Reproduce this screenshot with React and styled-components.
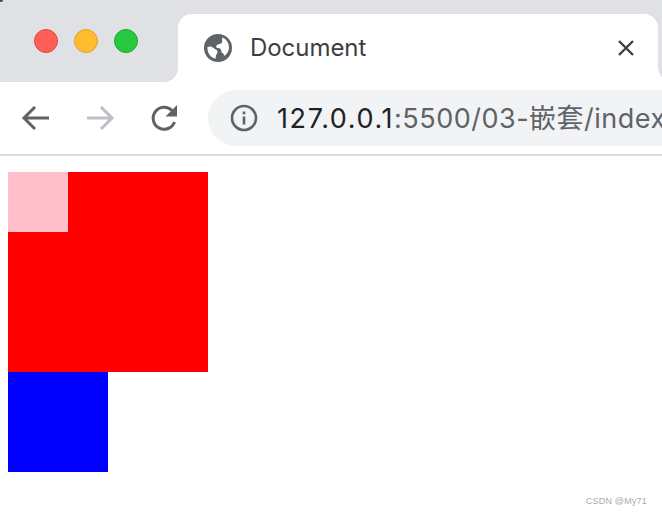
import React from 'react';
import styled, { createGlobalStyle } from 'styled-components';

const GlobalStyle = createGlobalStyle`
  html, body { margin: 0; padding: 0; background: #fff; }
  body { width: 662px; height: 514px; overflow: hidden; font-family: "Inter", "Noto Sans CJK SC", sans-serif; }
`;

const Window = styled.div`
  position: relative;
  width: 662px;
  height: 514px;
  overflow: hidden;
  background: #fff;
`;

const Corner = styled.span`
  position: absolute;
  left: 0;
  top: 0;
  width: 3px;
  height: 2px;
  background: #1d5f66;
  border-bottom-right-radius: 2px;
`;

const TabStrip = styled.div`
  display: flex;
  height: 82px;
`;

const Lights = styled.div`
  width: 178px;
  display: flex;
  gap: 16px;
  padding: 29px 0 0 34px;
  box-sizing: border-box;
  background: #dfe1e5;
  border-bottom-right-radius: 14px;
`;

const Light = styled.span`
  width: 24px;
  height: 24px;
  border-radius: 50%;
  box-sizing: border-box;
  background: ${(props) => props.$fill};
  border: 1px solid ${(props) => props.$edge};
`;

const TabSlot = styled.div`
  flex: 1;
  display: flex;
  padding: 14px 4px 0 0;
  background: #dfe1e5;
`;

const Tab = styled.div`
  position: relative;
  flex: 1;
  display: flex;
  align-items: center;
  padding: 0 22px 1px 25px;
  background: #fff;
  border-radius: 14px 14px 0 0;
  height: 68px;
  box-sizing: border-box;

  &::after {
    content: "";
    position: absolute;
    right: -4px;
    bottom: 0;
    width: 4px;
    height: 14px;
    background: radial-gradient(circle 14px at 14px 0, transparent 13.5px, #fff 14px);
  }
`;

const TabTitle = styled.span`
  flex: 1;
  margin-left: 17px;
  font-size: 24px;
  letter-spacing: -0.05px;
  color: #3c4043;
  line-height: 30px;
`;

const Toolbar = styled.div`
  display: flex;
  align-items: center;
  height: 72px;
  padding-left: 20px;
  border-bottom: 2px solid #dadce0;
`;

const NavButton = styled.div`
  width: 32px;
  height: 32px;
  margin-right: ${(props) => props.$gap}px;
  display: flex;
  align-items: center;
  justify-content: center;
`;

const Omnibox = styled.div`
  flex: 1;
  min-width: 0;
  height: 56px;
  display: flex;
  align-items: center;
  padding-left: 22px;
  background: #f1f3f4;
  border-radius: 28px 0 0 28px;
  overflow: hidden;
  white-space: nowrap;

  svg {
    flex-shrink: 0;
  }
`;

const Url = styled.span`
  margin: 0 0 3px 19px;
  font-size: 27px;
  letter-spacing: 0.5px;
  color: #5f6368;
`;

const Host = styled.span`
  color: #202124;
  letter-spacing: 1.6px;
`;

const Page = styled.div`
  padding: 16px 8px 0;
`;

const Big = styled.div`
  width: 200px;
  height: 200px;
  background: red;
`;

const Small = styled.div`
  width: 60px;
  height: 60px;
  background: pink;
`;

const Blue = styled.div`
  width: 100px;
  height: 100px;
  background: blue;
`;

const Watermark = styled.span`
  position: absolute;
  right: 15px;
  bottom: 8px;
  font-family: "Liberation Sans", Arial, sans-serif;
  font-size: 9px;
  letter-spacing: 0.2px;
  color: #aaa;
`;

const GlobeIcon = () => (
  <svg width="30" height="30" viewBox="0 0 30 30">
    <path fill="#5f6368" d="M15 1a14 14 0 1 0 0 28a14 14 0 0 0 0-28zM4.500 14c2.500-1 4.500-.5 6 1c1.500 1.500 3.500 1.500 4 3.500c.4 1.800-1 2-1.500 4c-.3 1.200-.3 2-.5 3.200C7.500 24.500 4 19.800 4.500 14zM26 15c-.3 3-2 6-4.500 8c-.5-2-1.500-3-3-3.500c.2-2.500-1-4.500-3.500-4.500c-2 0-2.500-2-1-3c2-1.300 4-.5 5-2.500c.8-1.500-.5-3 .5-5c3.800 1.500 6.800 5.500 6.500 10.500z" />
  </svg>
);

const CloseIcon = () => (
  <svg width="20" height="20" viewBox="0 0 20 20">
    <path d="M3 3L17 17M17 3L3 17" stroke="#3c4043" strokeWidth="2.4" fill="none" />
  </svg>
);

const Arrow = ({ color, flip }) => (
  <svg width="30" height="28" viewBox="0 0 30 28" style={flip ? { transform: 'scaleX(-1)' } : undefined}>
    <path d="M28 14H4M14 3L3 14L14 25" stroke={color} strokeWidth="3" fill="none" />
  </svg>
);

const ReloadIcon = () => (
  <svg width="32" height="32" viewBox="0 0 32 32">
    <path d="M26.500 20A11 11 0 1 1 24 8.500" stroke="#5f6368" strokeWidth="3" fill="none" />
    <path d="M29 3V14.500H17.500z" fill="#5f6368" />
  </svg>
);

const InfoIcon = () => (
  <svg width="28" height="28" viewBox="0 0 28 28">
    <circle cx="14" cy="14" r="12" stroke="#5f6368" strokeWidth="2.600" fill="none" />
    <rect x="12.700" y="12.500" width="2.600" height="8" fill="#5f6368" />
    <rect x="12.700" y="7.500" width="2.600" height="2.800" fill="#5f6368" />
  </svg>
);

export default function App() {
  return (
    <Window>
      <GlobalStyle />
      <TabStrip>
        <Lights>
          <Light $fill="#ff5f57" $edge="#e2463f" />
          <Light $fill="#febc2e" $edge="#dea123" />
          <Light $fill="#28c840" $edge="#1aab29" />
        </Lights>
        <TabSlot>
          <Tab>
            <GlobeIcon />
            <TabTitle>Document</TabTitle>
            <CloseIcon />
          </Tab>
        </TabSlot>
      </TabStrip>
      <Toolbar>
        <NavButton $gap={32}><Arrow color="#5f6368" /></NavButton>
        <NavButton $gap={32}><Arrow color="#bdc1c6" flip /></NavButton>
        <NavButton $gap={28}><ReloadIcon /></NavButton>
        <Omnibox>
          <InfoIcon />
          <Url><Host>127.0.0.1</Host>:5500/03-嵌套/index.html</Url>
        </Omnibox>
      </Toolbar>
      <Page>
        <Big><Small /></Big>
        <Blue />
      </Page>
      <Watermark>CSDN @My71</Watermark>
      <Corner />
    </Window>
  );
}
